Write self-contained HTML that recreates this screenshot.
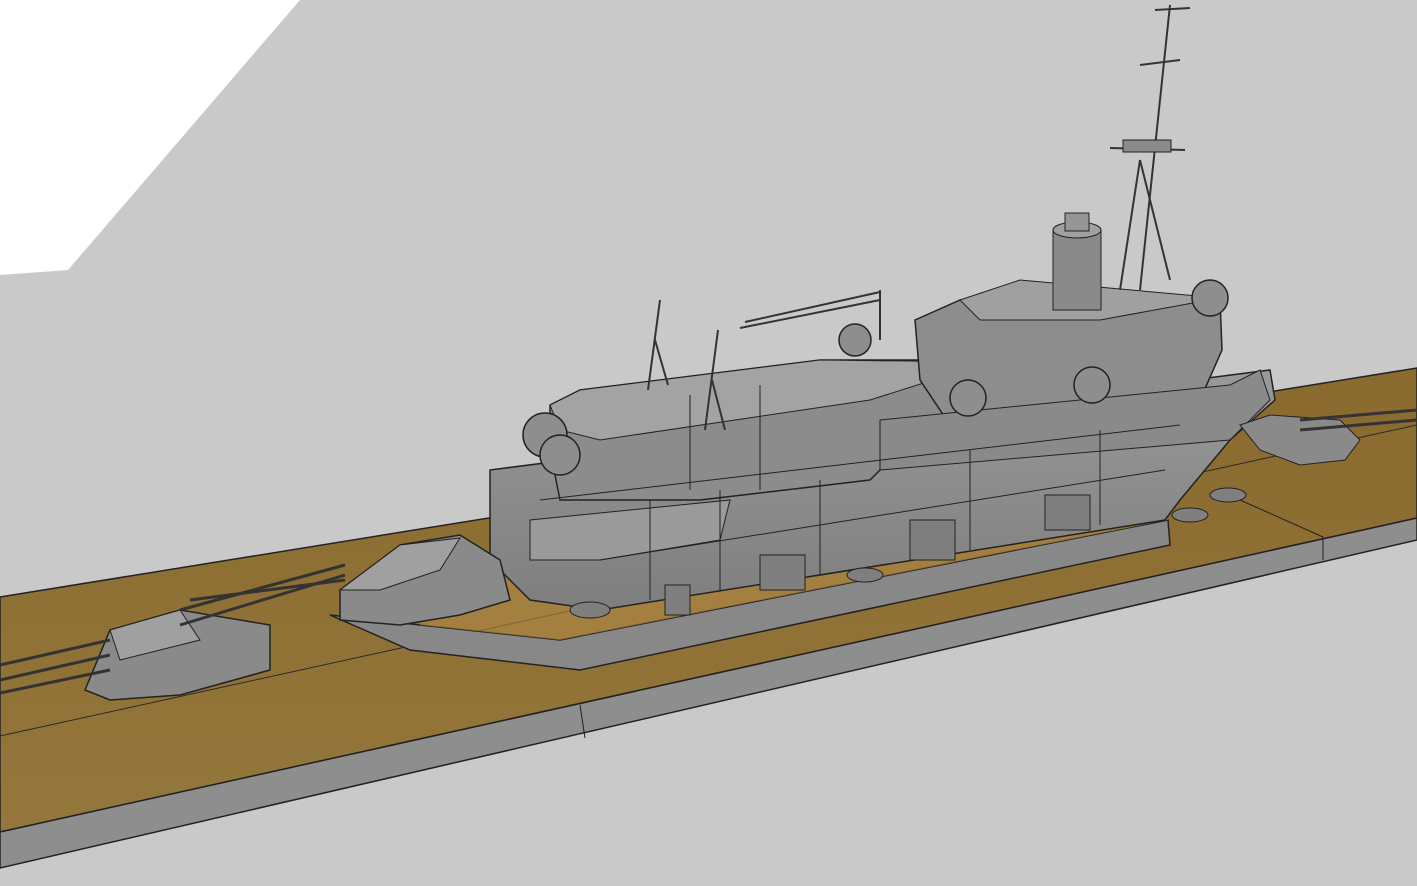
<!DOCTYPE html>
<html><head><meta charset="utf-8"><style>html,body{margin:0;padding:0;background:#c9c9c9;overflow:hidden}svg{display:block}</style></head><body>
<svg width="1417" height="886" viewBox="0 0 1417 886" xmlns="http://www.w3.org/2000/svg">
<defs>
<linearGradient id="hull" x1="0" y1="0" x2="0" y2="1"><stop offset="0" stop-color="#9a9a9a"/><stop offset="1" stop-color="#7e7e7e"/></linearGradient>
<linearGradient id="deck" x1="0" y1="0" x2="0" y2="1"><stop offset="0" stop-color="#8a6a2e"/><stop offset="1" stop-color="#94773c"/></linearGradient>
</defs>
<rect width="1417" height="886" fill="#c9c9c9"/>
<polygon points="0,0 300,0 68,270 0,275" fill="#ffffff"/>
<!-- deck strip -->
<polygon points="0,597 1417,368 1417,518 0,832" fill="url(#deck)" stroke="#222" stroke-width="1.5"/>
<polygon points="0,832 1417,518 1417,540 0,868" fill="#8e8e8e" stroke="#222" stroke-width="1.5"/>
<line x1="0" y1="736" x2="1417" y2="425" stroke="#2a2a2a" stroke-width="1"/>
<line x1="580" y1="705" x2="585" y2="738" stroke="#222"/>
<line x1="1323" y1="537" x2="1323" y2="560" stroke="#222"/>
<line x1="1323" y1="537" x2="1240" y2="500" stroke="#222"/>
<!-- lower raft -->
<polygon points="330,615 410,650 580,670 1170,545 1168,520 560,640 420,625" fill="#888" stroke="#222" stroke-width="1.5"/>
<polygon points="420,625 560,640 1168,520 1165,470 540,560 430,600" fill="#b08a48" opacity="0.6"/>
<!-- main hull side -->
<polygon points="490,470 1270,370 1275,400 1230,440 1180,500 1165,520 600,610 530,600 490,560" fill="url(#hull)" stroke="#222" stroke-width="1.5"/>
<polygon points="530,520 730,500 720,540 600,560 530,560" fill="#9a9a9a" stroke="#222"/>
<!-- upper superstructure -->
<polygon points="550,405 580,390 820,360 1000,360 1000,420 900,450 870,480 700,500 560,500 550,450" fill="#8c8c8c" stroke="#222" stroke-width="1.5"/>
<polygon points="550,405 580,390 820,360 990,362 870,400 600,440 560,430" fill="#a3a3a3" stroke="#222"/>
<polygon points="915,320 960,300 1220,300 1222,350 1200,400 1170,420 960,440 920,380" fill="#8d8d8d" stroke="#222" stroke-width="1.5"/>
<polygon points="960,300 1020,280 1220,298 1100,320 980,320" fill="#a0a0a0" stroke="#222"/>
<polygon points="880,420 1230,385 1260,370 1270,400 1230,440 880,470" fill="#8a8a8a" stroke="#222"/>
<!-- funnel -->
<rect x="1053" y="230" width="48" height="80" fill="#8a8a8a" stroke="#222"/>
<ellipse cx="1077" cy="230" rx="24" ry="8" fill="#a0a0a0" stroke="#222"/>
<rect x="1065" y="213" width="24" height="18" fill="#959595" stroke="#222"/>
<!-- mast -->
<g stroke="#333" stroke-width="2" fill="none">
<line x1="1170" y1="5" x2="1140" y2="290"/><line x1="1140" y1="160" x2="1120" y2="290"/><line x1="1140" y1="160" x2="1170" y2="280"/>
<line x1="1155" y1="10" x2="1190" y2="8"/><line x1="1140" y1="65" x2="1180" y2="60"/><line x1="1110" y1="148" x2="1185" y2="150"/>
<line x1="660" y1="300" x2="648" y2="390"/><line x1="655" y1="340" x2="668" y2="385"/>
<line x1="718" y1="330" x2="705" y2="430"/><line x1="712" y1="380" x2="725" y2="430"/>
<line x1="740" y1="328" x2="880" y2="300"/><line x1="745" y1="322" x2="880" y2="292"/><line x1="880" y1="290" x2="880" y2="340"/>
</g>
<rect x="1123" y="140" width="48" height="12" fill="#8a8a8a" stroke="#222"/>
<!-- domes -->
<g fill="#8e8e8e" stroke="#222" stroke-width="1.5">
<circle cx="545" cy="435" r="22"/><circle cx="560" cy="455" r="20"/><circle cx="855" cy="340" r="16"/>
<circle cx="968" cy="398" r="18"/><circle cx="1092" cy="385" r="18"/><circle cx="1210" cy="298" r="18"/>
</g>
<!-- turrets fore -->
<polygon points="340,590 400,545 460,535 500,560 510,600 460,615 400,625 340,620" fill="#8a8a8a" stroke="#222" stroke-width="1.5"/>
<polygon points="340,590 400,545 460,538 440,570 380,590" fill="#a0a0a0" stroke="#222"/>
<polygon points="85,690 110,630 180,610 270,625 270,670 180,695 110,700" fill="#8a8a8a" stroke="#222" stroke-width="1.5"/>
<polygon points="110,630 180,610 200,640 120,660" fill="#a0a0a0" stroke="#222"/>
<g stroke="#333" stroke-width="3">
<line x1="0" y1="665" x2="110" y2="640"/><line x1="0" y1="680" x2="110" y2="655"/><line x1="0" y1="693" x2="110" y2="670"/>
<line x1="180" y1="625" x2="345" y2="575"/><line x1="180" y1="610" x2="345" y2="565"/><line x1="190" y1="600" x2="345" y2="580"/>
</g>
<!-- aft turret -->
<polygon points="1240,425 1270,415 1340,420 1360,440 1345,460 1300,465 1260,450" fill="#8a8a8a" stroke="#222"/>
<g stroke="#333" stroke-width="3"><line x1="1300" y1="420" x2="1417" y2="410"/><line x1="1300" y1="430" x2="1417" y2="420"/></g>
<!-- small mounts -->
<g fill="#7f7f7f" stroke="#222">
<rect x="760" y="555" width="45" height="35"/><rect x="910" y="520" width="45" height="40"/><rect x="1045" y="495" width="45" height="35"/>
<rect x="665" y="585" width="25" height="30"/><ellipse cx="590" cy="610" rx="20" ry="8"/><ellipse cx="865" cy="575" rx="18" ry="7"/>
<ellipse cx="1190" cy="515" rx="18" ry="7"/><ellipse cx="1228" cy="495" rx="18" ry="7"/>
</g>
<!-- panel lines -->
<g stroke="#222" stroke-width="1" fill="none">
<line x1="600" y1="560" x2="1165" y2="470"/><line x1="540" y1="500" x2="1180" y2="425"/>
<line x1="650" y1="500" x2="650" y2="600"/><line x1="720" y1="490" x2="720" y2="590"/><line x1="820" y1="480" x2="820" y2="575"/>
<line x1="970" y1="450" x2="970" y2="550"/><line x1="1100" y1="430" x2="1100" y2="525"/>
<line x1="690" y1="395" x2="690" y2="490"/><line x1="760" y1="385" x2="760" y2="490"/>
</g>
</svg>
</body></html>
